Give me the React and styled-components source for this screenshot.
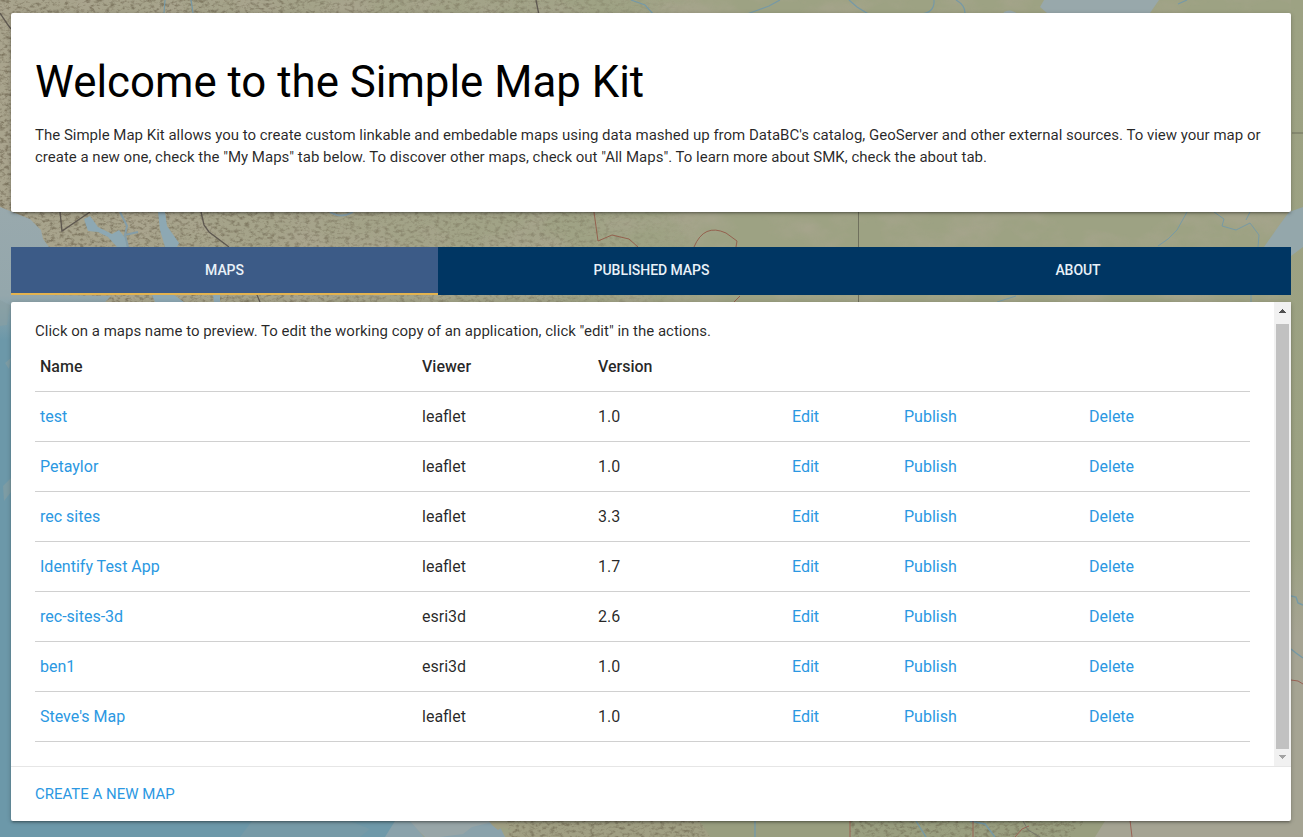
import React from "react";
import styled, { createGlobalStyle } from "styled-components";

const Global = createGlobalStyle`
  *, *::before, *::after { box-sizing: border-box; }
  body {
    margin: 0;
    overflow: hidden;
    font-family: Roboto, "Liberation Sans", sans-serif;
    font-size: 15px;
    line-height: 22.5px;
    color: rgba(0, 0, 0, 0.85);
    background: #9fa286;
  }
`;

const Page = styled.div`
  position: relative;
  width: 1303px;
  height: 837px;
  overflow: hidden;
  padding: 13px 12px 0 11px;
`;

const Backdrop = styled.svg`
  position: absolute;
  inset: 0;
  z-index: -1;
`;

const Card = styled.section`
  background: #fff;
  border-radius: 2px;
  box-shadow: 0 2px 2px 0 rgba(0, 0, 0, 0.14), 0 3px 1px -2px rgba(0, 0, 0, 0.12),
    0 1px 5px 0 rgba(0, 0, 0, 0.2);
`;

const Intro = styled(Card)`
  height: 199px;
  padding: 45px 24px 0;
`;

const Title = styled.h1`
  margin: 0;
  font-size: 43.8px;
  line-height: 48px;
  font-weight: 400;
  color: #000;
`;

const Text = styled.p`
  margin: 0;
  white-space: nowrap;
`;

const IntroText = styled(Text)`
  margin-top: 18px;
  line-height: 22px;
`;

const Tabs = styled.nav`
  display: grid;
  grid-template-columns: 427px 427px 426px;
  height: 48px;
  margin-top: 35px;
  background: #003663;
`;

const Tab = styled.a`
  height: 48px;
  text-align: center;
  font-size: 14px;
  line-height: 46px;
  font-weight: 500;
  letter-spacing: -0.05px;
  color: #e9f1f8;
  text-transform: uppercase;
  background: ${(p) => (p.$active ? "#3c5b87" : "transparent")};
  border-bottom: 2px solid ${(p) => (p.$active ? "#e3b34f" : "transparent")};
`;

const Panel = styled(Card)`
  margin-top: 7px;
  height: 519px;
`;

const ScrollArea = styled.div`
  display: flex;
  height: 464px;
`;

const Content = styled.div`
  flex: 1;
  padding: 18px 24px 0;
`;

const Table = styled.table`
  width: 1215px;
  margin-top: -1px;
  border-collapse: collapse;
  table-layout: fixed;
  font-size: 16px;
`;

const Row = styled.tr`
  height: 50px;
  border-bottom: 1px solid #d0d0d0;
`;

const Cell = styled.td`
  padding: 2px 5px 0;
  text-align: left;
  font-weight: 400;
`;

const Head = styled(Cell)`
  font-weight: 500;
`;

const Link = styled.a`
  color: #2b98e2;
`;

const Scrollbar = styled.div`
  display: flex;
  flex-direction: column;
  width: 17px;
  height: 464px;
  padding: 0 2px;
  background: #f1f1f1;
`;

const ScrollButton = styled.div`
  display: flex;
  justify-content: center;
  align-items: flex-start;
  height: ${(p) => p.$height}px;
  padding-top: ${(p) => p.$top}px;
`;

const Thumb = styled.div`
  height: 425px;
  background: #c1c1c1;
`;

const Footer = styled.footer`
  height: 55px;
  padding: 16px 24px;
  border-top: 1px solid #e6e6e6;
  text-transform: uppercase;
`;

const columns = [382, 176, 194, 112, 185, 166];

const maps = [
  ["test", "leaflet", "1.0"],
  ["Petaylor", "leaflet", "1.0"],
  ["rec sites", "leaflet", "3.3"],
  ["Identify Test App", "leaflet", "1.7"],
  ["rec-sites-3d", "esri3d", "2.6"],
  ["ben1", "esri3d", "1.0"],
  ["Steve's Map", "leaflet", "1.0"],
];

function Terrain() {
  return (
    <Backdrop width="1303" height="837" viewBox="0 0 1303 837" aria-hidden="true">
      <defs>
        <filter id="relief" x="0" y="0" width="100%" height="100%" colorInterpolationFilters="sRGB">
          <feTurbulence type="fractalNoise" baseFrequency="0.2 0.3" numOctaves="4" seed="8" result="n" />
          <feColorMatrix in="n" type="matrix" values="0 0 0 0 0.36  0 0 0 0 0.32  0 0 0 0 0.24  3 0 0 0 -1.4" />
          <feComposite operator="in" in2="SourceGraphic" />
        </filter>
        <filter id="tint" x="0" y="0" width="100%" height="100%" colorInterpolationFilters="sRGB">
          <feTurbulence type="fractalNoise" baseFrequency="0.018 0.03" numOctaves="4" seed="21" />
          <feColorMatrix type="matrix" values="0 0 0 0 0.67  0 0 0 0 0.65  0 0 0 0 0.57  3 0 0 0 -1.3" />
        </filter>
        <linearGradient id="sea" gradientUnits="userSpaceOnUse" x1="0" y1="200" x2="0" y2="837">
          <stop offset="0" stopColor="#99a9ad" />
          <stop offset="0.15" stopColor="#94a7ac" />
          <stop offset="0.22" stopColor="#6c98a9" />
          <stop offset="1" stopColor="#6c98a9" />
        </linearGradient>
        <linearGradient id="east" x1="0" y1="0" x2="0" y2="1">
          <stop offset="0" stopColor="#9da283" />
          <stop offset="0.65" stopColor="#9ba182" />
          <stop offset="0.76" stopColor="#a6a493" />
          <stop offset="1" stopColor="#a5a493" />
        </linearGradient>
        <linearGradient id="range" x1="0" y1="0" x2="1" y2="0">
          <stop offset="0" stopColor="#aba48f" stopOpacity=".8" />
          <stop offset="0.45" stopColor="#aba48f" stopOpacity=".5" />
          <stop offset="1" stopColor="#aba48f" stopOpacity="0" />
        </linearGradient>
        <linearGradient id="fade" gradientUnits="userSpaceOnUse" x1="0" y1="0" x2="700" y2="0">
          <stop offset="0" stopColor="#fff" />
          <stop offset="0.35" stopColor="#ddd" />
          <stop offset="0.55" stopColor="#999" />
          <stop offset="0.8" stopColor="#888" />
          <stop offset="1" stopColor="#000" />
        </linearGradient>
        <mask id="north" maskUnits="userSpaceOnUse" x="0" y="0" width="700" height="302">
          <rect width="700" height="302" fill="url(#fade)" />
        </mask>
      </defs>
      <rect width="1303" height="837" fill="#9da283" />
      <rect width="1303" height="837" filter="url(#tint)" opacity="0.6" />
      <rect x="1291" width="12" height="837" fill="url(#east)" />
      <path d="M0 0H700V302H0z" fill="url(#range)" />
      <g mask="url(#north)">
        <path d="M0 0H700V302H0z" fill="#000" filter="url(#relief)" opacity=".55" />
      </g>
      <path d="M0 207L15 213L30 219L41 230L43 239L49 247V295L111 296L105 302H14V821H360L395 837H0z" fill="url(#sea)" />
      <path d="M0 300L10 305L7 325L0 326zM11 358L5 363L9 369zM11 478L3 486L4 501L11 492z" fill="#899fa2" opacity=".6" />
      <path d="M252 821H395V837H240z" fill="#769aa7" />
      <path d="M350 821H395L405 829L393 837H360L370 829z" fill="#6f99a9" />
      <path d="M408 821H490L505 837H425z" fill="#98a6a8" />
      <path d="M395 821H410L424 837H385zM472 827L463 834L440 837H505L497 821z" fill="#8aa2ab" />
      <path d="M489 821H765L755 837H505L512 830L503 827L498 830L492 825z" fill="#a09f83" />
      <path d="M505 821H700L710 837H510z" fill="#000" filter="url(#relief)" opacity=".45" />
      <path d="M700 821H1110L1100 837H710z" fill="#999e7f" />
      <path d="M850 821H1085L1070 837H850z" fill="#000" filter="url(#relief)" opacity=".4" />
      <path d="M1105 821H1303V837H1095z" fill="#a5a493" />
      <path d="M84 219L90 216L98 227L112 234L119 230L126 239L127 247H117L108 237L98 232L88 231zM158 212H165L167 226L179 243L177 247H165L160 230zM152 295H174L184 302H155zM213 295H220V302H214z" fill="#8da8b3" />
      <path d="M120 212L127 226L125 235L138 232M125 235L128 247M330 212Q341 219 353 212" fill="none" stroke="#849da8" strokeWidth="2" />
      <path d="M60 212L62 231L90 212M201 212L204 225L209 232L229 247M257 295L260 302M0 13L8 25L11 29M536 0L539 15" fill="none" stroke="#5e5850" strokeWidth="1.3" />
      <path d="M594 212L598 241L612 235L629 239L638 247M694 247Q704 223 726 233L737 241L736 247M734 302L740 296" fill="none" stroke="#94614e" strokeWidth="1" />
      <path d="M858.5 212V247M858.5 295V302M1292 133H1303" stroke="#6f705d" fill="none" strokeWidth="1" />
      <path d="M1044 0H1159L1150 13H1047L1040 7zM1004 12Q1010 8 1018 14H1003z" fill="#98a8ab" />
      <path d="M165 0L164 13M191 0L193 13M747 14L769 6L780 0M849 0L857 7L870 15M920 14Q935 13 934 0M956 0Q965 5 965 13M631 0L645 5L654 15M1178 4L1187 0" fill="none" stroke="#7699a6" strokeWidth="1.2" />
      <path d="M1303 207L1289 212L1278 227L1264 247H1291V256L1303 247z" fill="#94a7ab" />
      <path d="M1187 212L1177 230L1168 239L1158 246M1214 212L1224 219L1222 226L1236 230L1250 223L1259 235L1258 247M1250 212L1246 220M1251 295V302M997 302L1016 296" fill="none" stroke="#779aa5" strokeWidth="1" />
      <path d="M1291 596L1296 597L1298 603L1303 605M1291 649L1296 653L1303 658M755 821V837M916 821L926 837M970 821L985 824L995 837" fill="none" stroke="#769aa6" strokeWidth="1.4" />
      <path d="M1291 680L1298 681L1303 684M1130 820L1132 837M850 821V837M973 821V837M1015 837L1022 829L1029 826" fill="none" stroke="#9a6255" strokeWidth="1" />
      <path d="M1023 821L1028 830L1040 837" fill="none" stroke="#78796d" />
    </Backdrop>
  );
}

export default function App() {
  return (
    <>
      <Global />
      <Page>
        <Terrain />
        <Intro>
          <Title>Welcome to the Simple Map Kit</Title>
          <IntroText>
            The Simple Map Kit allows you to create custom linkable and embedable maps using data mashed up from DataBC's catalog, GeoServer and other external sources. To view your map or
            <br />
            create a new one, check the "My Maps" tab below. To discover other maps, check out "All Maps". To learn more about SMK, check the about tab.
          </IntroText>
        </Intro>
        <Tabs>
          <Tab $active>Maps</Tab>
          <Tab>Published Maps</Tab>
          <Tab>About</Tab>
        </Tabs>
        <Panel>
          <ScrollArea>
            <Content>
              <Text>Click on a maps name to preview. To edit the working copy of an application, click "edit" in the actions.</Text>
              <Table>
                <colgroup>
                  {columns.map((width, i) => (
                    <col key={i} width={width} />
                  ))}
                </colgroup>
                <thead>
                  <Row>
                    <Head as="th">Name</Head>
                    <Head as="th">Viewer</Head>
                    <Head as="th">Version</Head>
                    <Head as="th" colSpan={3} />
                  </Row>
                </thead>
                <tbody>
                  {maps.map(([name, viewer, version]) => (
                    <Row key={name}>
                      <Cell><Link>{name}</Link></Cell>
                      <Cell>{viewer}</Cell>
                      <Cell>{version}</Cell>
                      <Cell><Link>Edit</Link></Cell>
                      <Cell><Link>Publish</Link></Cell>
                      <Cell><Link>Delete</Link></Cell>
                    </Row>
                  ))}
                </tbody>
              </Table>
            </Content>
            <Scrollbar>
              <ScrollButton $height={22} $top={7}>
                <svg width="7" height="4" viewBox="0 0 7 4" shapeRendering="crispEdges"><path d="M3 0h1v1h1v1h1v1h1v1H0V3h1V2h1V1h1z" fill="#505050" /></svg>
              </ScrollButton>
              <Thumb />
              <ScrollButton $height={17} $top={6}>
                <svg width="7" height="4" viewBox="0 0 7 4" shapeRendering="crispEdges"><path d="M0 0h7v1H6v1H5v1H4v1H3V3H2V2H1V1H0z" fill="#a3a3a3" /></svg>
              </ScrollButton>
            </Scrollbar>
          </ScrollArea>
          <Footer><Link>Create a new map</Link></Footer>
        </Panel>
      </Page>
    </>
  );
}
